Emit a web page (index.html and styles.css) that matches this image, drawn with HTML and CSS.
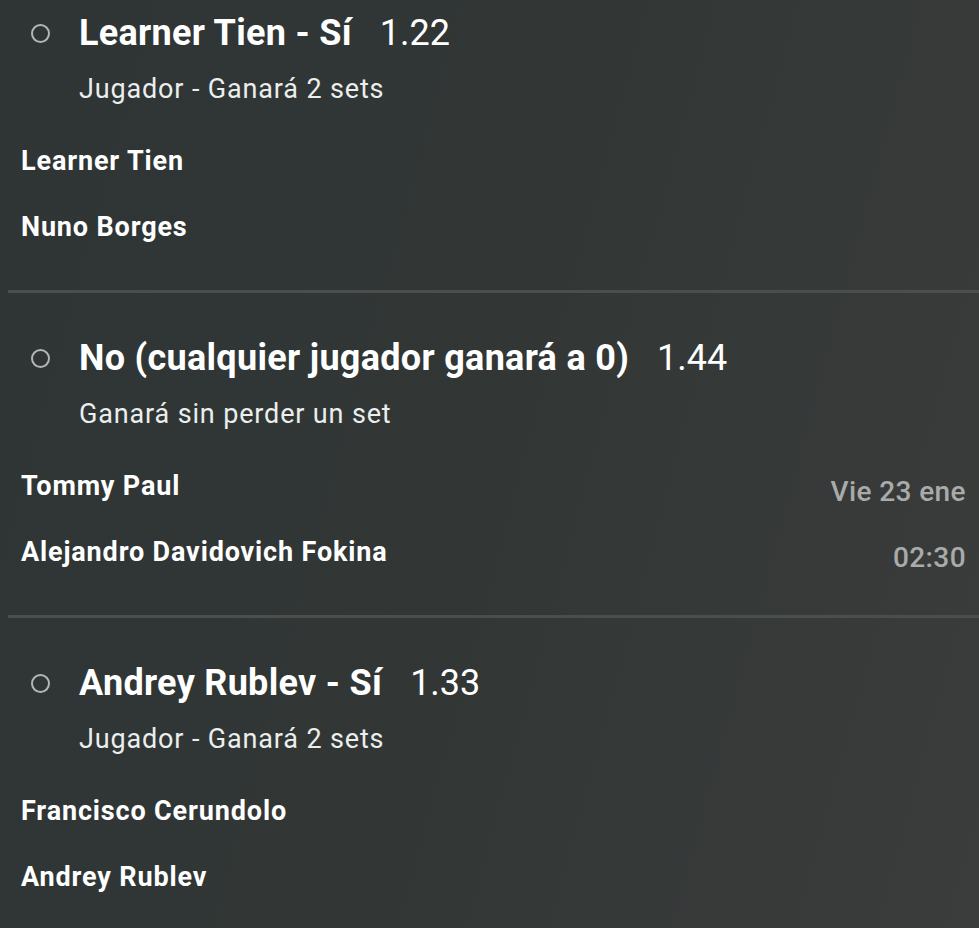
FILE: index.html
```html
<!DOCTYPE html>
<html>
<head>
  <link rel="stylesheet" href="styles.css">
</head>
<body>
  <div class="markets">
    <div class="market">
      <div class="market-head">
        <span class="radio"></span>
        <span class="pick">Learner Tien - Sí</span>
        <span class="odds">1.22</span>
      </div>
      <div class="market-sub">Jugador - Ganará 2 sets</div>
      <div class="event">
        <div class="players">
          <div class="player">Learner Tien</div>
          <div class="player">Nuno Borges</div>
        </div>
      </div>
    </div>

    <div class="market">
      <div class="market-head">
        <span class="radio"></span>
        <span class="pick">No (cualquier jugador ganará a 0)</span>
        <span class="odds">1.44</span>
      </div>
      <div class="market-sub">Ganará sin perder un set</div>
      <div class="event">
        <div class="players">
          <div class="player">Tommy Paul</div>
          <div class="player">Alejandro Davidovich Fokina</div>
        </div>
        <div class="when">
          <div class="when-line">Vie 23 ene</div>
          <div class="when-line">02:30</div>
        </div>
      </div>
    </div>

    <div class="market">
      <div class="market-head">
        <span class="radio"></span>
        <span class="pick">Andrey Rublev - Sí</span>
        <span class="odds">1.33</span>
      </div>
      <div class="market-sub">Jugador - Ganará 2 sets</div>
      <div class="event">
        <div class="players">
          <div class="player">Francisco Cerundolo</div>
          <div class="player">Andrey Rublev</div>
        </div>
      </div>
    </div>
  </div>
</body>
</html>
```

FILE: styles.css
```css
html, body {
  height: 100%;
}
body {
  margin: 0;
  font-family: Roboto, "Noto Sans", Arial, sans-serif;
  color: #fff;
  background: linear-gradient(105deg, #2e3534 0%, #323736 50%, #3b3c3c 100%);
  overflow: hidden;
}
.markets {
  margin-left: 8px;
}
.market {
  padding: 43px 13px 46px 13px;
  border-bottom: 3px solid #4a4f4e;
}
.market:first-child {
  padding-top: 11px;
}
.market-head {
  display: flex;
  align-items: center;
  height: 44px;
  padding-left: 10px;
}
.radio {
  width: 15px;
  height: 15px;
  border: 2px solid #b4b6b5;
  border-radius: 50%;
  margin-right: 29px;
  flex-shrink: 0;
}
.pick {
  font-size: 36px;
  font-weight: 700;
  letter-spacing: 0.3px;
}
.odds {
  font-size: 36px;
  font-weight: 400;
  margin-left: 28px;
}
.market-sub {
  margin-top: 17px;
  height: 34px;
  line-height: 34px;
  padding-left: 58px;
  font-size: 27px;
  letter-spacing: 0.85px;
  color: #eceeed;
}
.event {
  display: flex;
  justify-content: space-between;
  align-items: flex-start;
  margin-top: 38px;
}
.players {
  display: flex;
  flex-direction: column;
  gap: 32px;
}
.player {
  height: 34px;
  line-height: 34px;
  font-size: 27px;
  font-weight: 700;
  letter-spacing: 0.85px;
}
.when {
  display: flex;
  flex-direction: column;
  align-items: flex-end;
  gap: 32px;
  margin-top: 6px;
  margin-bottom: -6px;
}
.when-line {
  height: 34px;
  line-height: 34px;
  font-size: 28px;
  font-weight: 500;
  letter-spacing: 0.4px;
  color: #a9abaa;
}
```
